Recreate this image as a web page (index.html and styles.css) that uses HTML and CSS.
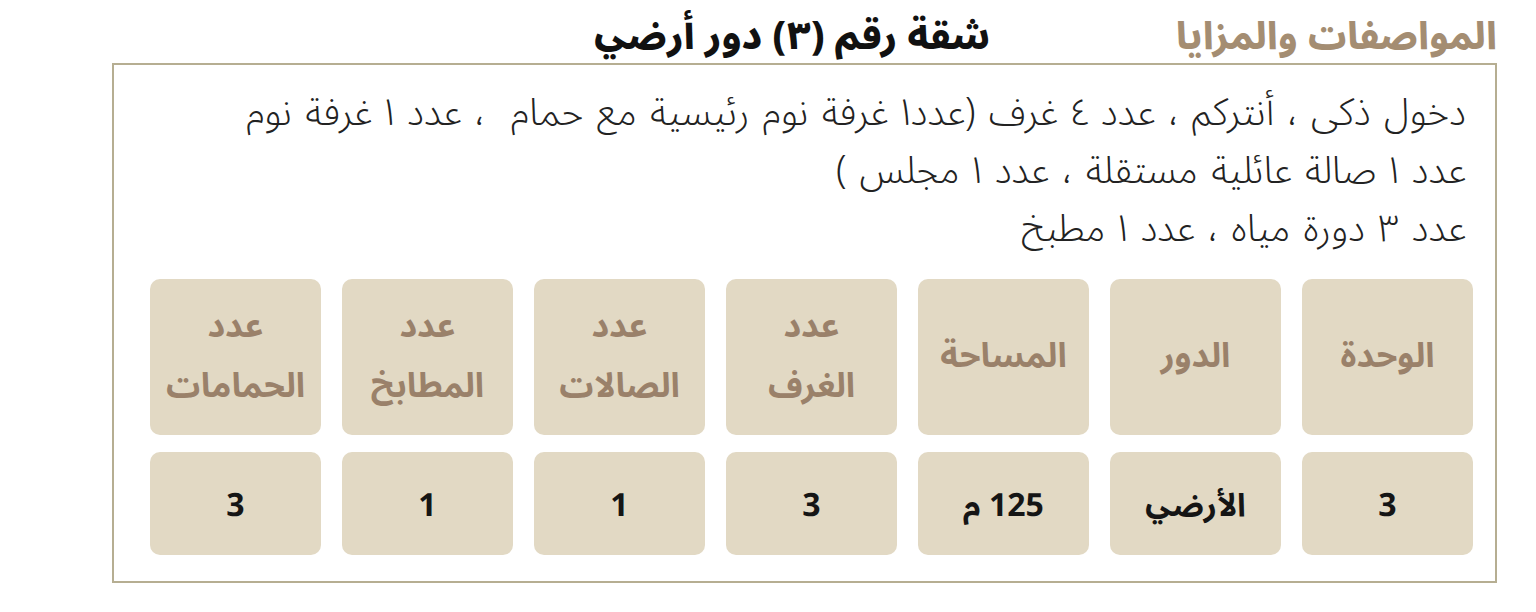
FILE: index.html
```html
<!DOCTYPE html>
<html lang="ar" dir="rtl">
<head>
<meta charset="utf-8">
<link rel="stylesheet" href="styles.css">
</head>
<body>
<div class="page">
  <header class="top">
    <h2 class="section-title">المواصفات والمزايا</h2>
    <h1 class="unit-title">شقة رقم (٣) دور أرضي</h1>
  </header>
  <section class="box">
    <div class="desc">
      <p>دخول ذكى ، أنتركم ، عدد ٤ غرف (عدد١ غرفة نوم رئيسية مع حمام &nbsp;، عدد ١ غرفة نوم</p>
      <p>عدد ١ صالة عائلية مستقلة ، عدد ١ مجلس )</p>
      <p>عدد ٣ دورة مياه ، عدد ١ مطبخ</p>
    </div>
    <div class="grid">
      <div class="cell head">الوحدة</div>
      <div class="cell head">الدور</div>
      <div class="cell head">المساحة</div>
      <div class="cell head">عدد<br>الغرف</div>
      <div class="cell head">عدد<br>الصالات</div>
      <div class="cell head">عدد<br>المطابخ</div>
      <div class="cell head">عدد<br>الحمامات</div>
      <div class="cell val">3</div>
      <div class="cell val">الأرضي</div>
      <div class="cell val">125 م</div>
      <div class="cell val">3</div>
      <div class="cell val">1</div>
      <div class="cell val">1</div>
      <div class="cell val">3</div>
    </div>
  </section>
</div>
</body>
</html>
```
FILE: styles.css
```css
* { box-sizing: border-box; }
html, body { margin: 0; padding: 0; background: #fff; }
body {
  font-family: "Noto Sans Arabic UI", "Noto Sans Arabic", "DejaVu Sans", sans-serif;
  width: 1536px;
}
.page { padding: 0 39px 0 112px; }
.top {
  display: flex;
  align-items: flex-start;
  height: 63px;
}
.section-title,
.unit-title {
  margin: 0;
  font-size: 38px;
  font-weight: 800;
  line-height: 56px;
  padding-top: 6px;
}
.section-title {
  color: #a48d72;
  width: 507px;
}
.unit-title {
  color: #111;
  font-size: 39px;
}
.box {
  border: 2px solid #b6ae92;
  padding: 16px 22px 26px 37px;
}
.desc { padding-right: 7px; }
.desc p {
  margin: 0;
  font-size: 38px;
  font-weight: 300;
  line-height: 58px;
  color: #222;
  letter-spacing: -0.5px;
  word-spacing: 3px;
}
.grid {
  margin-top: 24px;
  display: grid;
  grid-template-columns: repeat(7, 171px);
  grid-template-rows: 156px 103px;
  gap: 17px 21px;
}
.cell {
  background: #e2d9c4;
  border-radius: 10px;
  display: flex;
  align-items: center;
  justify-content: center;
  text-align: center;
}
.head {
  color: #9a816a;
  font-size: 34px;
  font-weight: 700;
  line-height: 60px;
  padding-bottom: 6px;
}
.val {
  color: #151515;
  font-size: 32px;
  font-weight: 700;
}
```
